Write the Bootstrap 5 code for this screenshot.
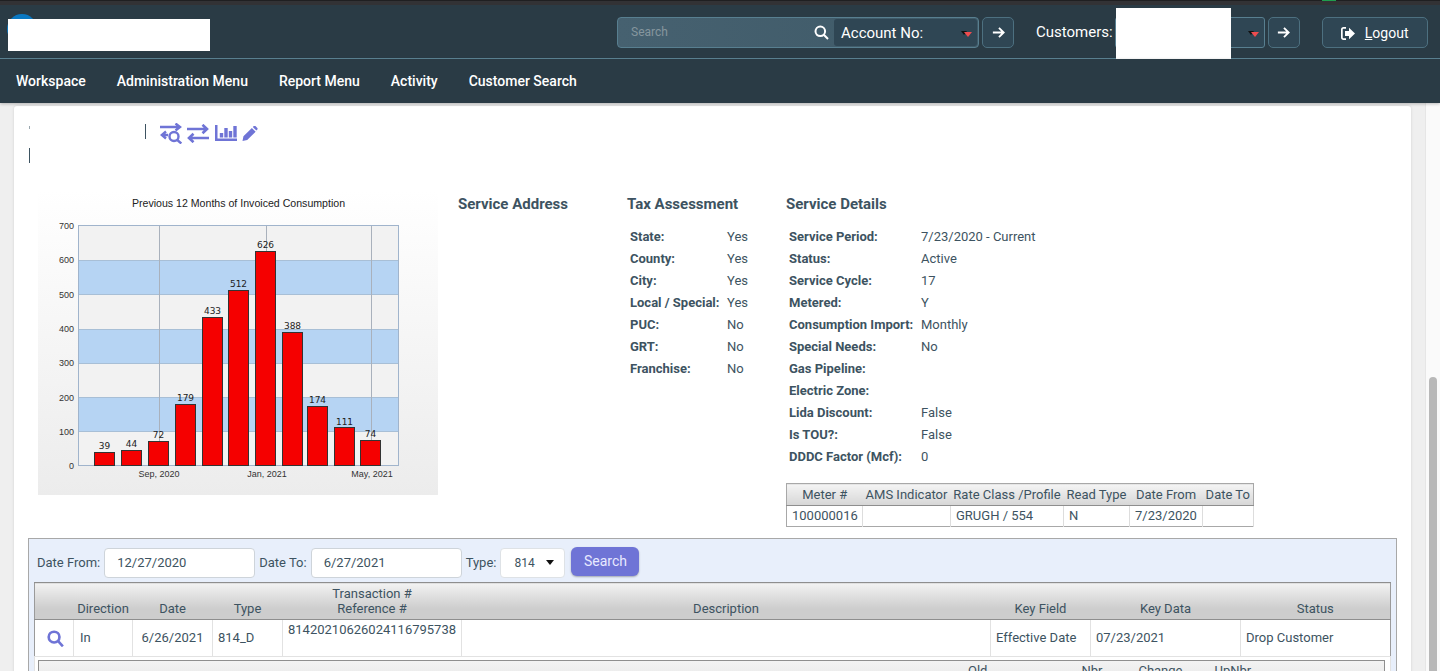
<!DOCTYPE html>
<html lang="en">
<head>
<meta charset="utf-8">
<title>Customer Service</title>
<link rel="stylesheet" href="https://cdn.jsdelivr.net/npm/bootstrap@5.3.0/dist/css/bootstrap.min.css">
<style>
html,body{height:671px;overflow:hidden;margin:0}
body{font-family:Roboto,"Liberation Sans",sans-serif;font-size:13px;color:#3d5361;background:#efefef}
.page-head{position:relative}
.top-strip{height:5px;background:linear-gradient(#1f1f21 1px,#323235 1px);position:relative}
.strip-green{position:absolute;left:1322px;top:0;width:14px;height:1px;background:#1f9d4d}
.head-top{height:54px;background:#2a3b45;border-bottom:1px solid #5d8596;padding:2px 12px 0 617px}
.logo-mask{position:absolute;left:8px;top:19px;width:202px;height:32px;background:#fff}
.logo-dot{position:absolute;left:7px;top:14px;width:30px;height:30px;border-radius:50%;background:#0a78c2}
.mask-white{position:absolute;left:1116px;top:8px;width:115px;height:53px;background:#fff}
.search-box{width:362px;height:31px;background:linear-gradient(90deg,#466170,#3f5a68);border:1px solid #587f90;border-radius:4px;flex:none}
.search-field{flex:1 1 auto;padding:0 0 2px 13px;font-size:12px;background:transparent;border:0;min-width:0;color:#fff;outline:0}
.search-field::placeholder{color:#85969e}
.search-ico{padding-right:5px}
.select-box{background:#2f4654;color:#fff;font-size:15px;display:flex;align-items:center;justify-content:space-between;padding:1px 5px 0 7px;border-radius:3px;flex:none}
.account-sel{width:143px;margin:1px 1px 1px 0}
.cust-sel{width:150px;height:31px;border:1px solid #587f90;justify-content:flex-end;margin-left:2px}
.caret-pair{display:flex;margin-top:2px}
.caret-black{width:0;height:0;border-left:3px solid transparent;border-right:3px solid transparent;border-top:4px solid #111;margin-right:-3px;margin-top:-1px}
.caret-red{width:0;height:0;border-left:4px solid transparent;border-right:4px solid transparent;border-top:5px solid #ef4c4f}
.go-btn{width:32px;height:31px;background:#2f4654;border:1px solid #4d7080;border-radius:5px;color:#fff;padding:0;display:flex;align-items:center;justify-content:center;flex:none}
.go-first{margin-left:3px}
.go-second{margin-left:3px}
.cust-label{color:#fff;font-size:15px;margin-left:22px}
.logout-btn{width:106px;height:31px;background:#2f4654;border:1px solid #4d7080;border-radius:5px;color:#fff;font-size:14px;padding:1px 0 0;display:flex;align-items:center;justify-content:center;gap:10px;margin-left:22px;flex:none}
.main-nav{height:44px;background:#2a3b45;padding-left:16px;gap:31px;box-shadow:0 1px 3px rgba(0,0,0,.25);position:relative}
.main-nav a{color:#fff;font-size:14px;font-weight:500;text-decoration:none}
.page-body{height:568px;overflow:hidden}
.page-main{flex:1 1 auto;min-width:0}
.fake-scroll{width:15px;flex:none;background:#fafafa;border-left:1px solid #e6e6e6;padding:274px 3px 0 3px}
.fake-thumb{height:300px;background:#b8b8b8;border-radius:4px 4px 0 0}
.content-sheet{background:#fff;margin:3px 14px 0 14px;height:600px;padding:0 14px;box-shadow:0 0 3px rgba(0,0,0,.12);border-radius:3px 3px 0 0}
.tool-row{height:84px;padding-top:16px}
.tick-small{width:1px;height:3px;background:#9aa7af;margin:4px 0 0 1px}
.tick-main{width:1px;height:15px;background:#3d5361;margin:2px 14px 0 115px}
.tick-low{width:1px;height:15px;background:#3d5361;margin:4px 0 0 1px}
.ico-a{margin-top:1px;margin-right:5px}
.ico-b{margin-top:2px;margin-right:6px}
.ico-c{margin-top:3px;margin-right:5px}
.ico-d{margin-top:4px}
.chart-col{width:400px;margin-left:10px;flex:none}
.addr-col{width:169px;margin-left:20px;flex:none;padding-top:5px}
.tax-col{width:159px;flex:none;padding-top:5px}
.svc-col{flex:1 1 auto;padding-top:5px}
.sec-title{font-size:15px;font-weight:700;color:#3d5361;height:22px;line-height:18px;margin:0 0 9px}
.info-table{border-collapse:collapse}
.info-table th,.info-table td{height:22px;padding:0 3px;font-size:13px;line-height:22px;white-space:nowrap}
.info-table th{font-weight:700}
.info-table td{font-weight:400}
.tax-col .info-table th{width:97px}
.svc-col .info-table th{width:132px}
.meter-table{border-collapse:collapse;width:468px;margin-top:15px;border:1px solid #a8a8a8;table-layout:fixed}
.meter-table th{background:linear-gradient(#f4f4f4,#d6d6d6);border-bottom:1px solid #8e8e8e;font-weight:400;text-align:center;font-size:13px;height:22px;padding:0;white-space:nowrap}
.meter-table td{border-right:1px solid #ddd;height:21px;font-size:13px;padding:0 5px;white-space:nowrap}
.mc-1{width:76px}.mc-2{width:88px}.mc-3{width:113px}.mc-4{width:66px}.mc-5{width:73px}
.txn-panel{margin-top:11px;border:1px solid #a8a8a8;background:#e8effb;height:200px;padding:0 5px}
.filter-row{height:43px;padding:4px 0 0 3px;gap:4px}
.date-input{width:151px;height:30px;font-size:13px;padding:0 12px;border:1px solid #ced4da;border-radius:4px;color:#3d5361;background:#fff}
.type-select{width:65px;height:30px;font-size:12px;padding:0 0 0 13px;color:#3d5361;border-radius:4px;background-position:right 10px center;background-size:8px 5px;background-image:url("data:image/svg+xml,%3csvg xmlns='http://www.w3.org/2000/svg' viewBox='0 0 8 5'%3e%3cpath d='M0 0h8L4 5z' fill='%23111'/%3e%3c/svg%3e")}
.search-btn{background:#6f74d6;border:0;color:#e8e9ff;font-size:14px;height:29px;width:68px;padding:0;margin-left:2px;margin-top:-2px;box-shadow:0 1px 2px rgba(0,0,0,.3)}
.txn-table{width:100%;border-collapse:collapse;table-layout:fixed;background:#fff;border-left:1px solid #9a9a9a;border-right:1px solid #9a9a9a}
.txn-table th{background:linear-gradient(#f2f2f2,#cdcdcd 70%);font-weight:400;text-align:center;vertical-align:bottom;font-size:13px;line-height:15px;padding:3px 0;border-top:1px solid #8e8e8e;border-bottom:1px solid #8e8e8e}
.txn-table td{font-size:13px;border-right:1px solid #e2e2e2;border-bottom:1px solid #e2e2e2;height:37px;padding:0 5px;vertical-align:middle;line-height:20px}
.txn-table td:last-child{border-right:0}
.tc-1{width:39px}.tc-2{width:59px}.tc-3{width:80px}.tc-4{width:70px}.tc-5{width:179px}.tc-7{width:100px}.tc-8{width:150px}.tc-9{width:150px}
.glass-cell{padding-left:12px!important}
.in-cell{padding-left:6px!important}
.nest-wrap{background:#fff;border-left:1px solid #e2e2e2;border-right:1px solid #e2e2e2;padding:3px 5px 0 3px;height:60px}
.nest-box{border:1px solid #8e8e8e;background:linear-gradient(#f2f2f2,#dcdcdc);height:50px;padding:2px 0 0 929px;line-height:15px}
.nb-2{margin-left:94px}.nb-3{margin-left:36px}.nb-4{margin-left:32px}
</style>
</head>
<body>
<div class="page-head">
  <div class="top-strip"><span class="strip-green"></span></div>
  <div class="head-top d-flex align-items-center">
    <div class="search-box d-flex align-items-stretch">
      <input class="search-field" placeholder="Search" aria-label="Search">
      <span class="search-ico d-flex align-items-center"><svg width="15" height="15" viewBox="0 0 15 15" fill="none" stroke="#fff" stroke-width="2"><circle cx="6.300" cy="6.300" r="4.800"/><path d="M9.800 9.800 14 14"/></svg></span>
      <div class="select-box account-sel"><span>Account No:</span><span class="caret-pair"><span class="caret-black"></span><span class="caret-red"></span></span></div>
    </div>
    <button class="go-btn go-first" aria-label="Go"><svg width="15" height="15" viewBox="0 0 16 16" fill="none" stroke="#fff" stroke-width="2"><path d="M2 8h11.500M8.500 3 13.500 8l-5 5"/></svg></button>
    <span class="cust-label">Customers:</span>
    <div class="select-box cust-sel"><span class="caret-pair"><span class="caret-black"></span><span class="caret-red"></span></span></div>
    <button class="go-btn go-second" aria-label="Go"><svg width="15" height="15" viewBox="0 0 16 16" fill="none" stroke="#fff" stroke-width="2"><path d="M2 8h11.500M8.500 3 13.500 8l-5 5"/></svg></button>
    <button class="logout-btn"><svg width="14" height="13" viewBox="0 0 14 13" fill="#fff"><path d="M5 0H2.500C1 0 0 1 0 2.500v8C0 12 1 13 2.500 13H5v-1.700H2.700c-.6 0-1-.4-1-1V2.700c0-.6.4-1 1-1H5z"/><path d="M8 .8 14 6.500 8 12.200V9H4V4h4z"/></svg><span><u>L</u>ogout</span></button>
  </div>
  <div class="logo-dot"></div>
  <div class="logo-mask"></div>
  <div class="mask-white"></div>
  <nav class="main-nav d-flex align-items-center">
    <a href="#">Workspace</a><a href="#">Administration Menu</a><a href="#">Report Menu</a><a href="#">Activity</a><a href="#">Customer Search</a>
  </nav>
</div>
<div class="page-body d-flex">
<div class="page-main">
  <div class="content-sheet">
    <div class="tool-row">
      <div class="d-flex align-items-start">
        <span class="tick-small"></span>
        <span class="tick-main"></span>
        <svg class="ico-a" width="22" height="21" viewBox="0 0 22 21" fill="none" stroke="#6f74d6" stroke-width="2.400"><path d="M0 4h20M15.500 .5 20 4l-4.500 3.500"/><path d="M8 12H2M6 8.500 1.800 12 6 15.500"/><circle cx="14" cy="13.500" r="4.500"/><path d="m17.300 17 4 3.500"/></svg>
        <svg class="ico-b" width="22" height="19" viewBox="0 0 22 19" fill="none" stroke="#6f74d6" stroke-width="2.600"><path d="M0 5h20M15.500 .8 20 5l-4.500 4.200"/><path d="M22 14H2M6.500 9.800 2 14l4.500 4.200"/></svg>
        <svg class="ico-c" width="22" height="16" viewBox="0 0 22 16" fill="#6f74d6"><path d="M0 0h2.500v13.500H22V16H0z"/><rect x="4.800" y="8" width="3.400" height="4.500"/><rect x="9.300" y="3" width="3.400" height="9.500"/><rect x="13.800" y="6" width="3.400" height="6.500"/><rect x="18.300" y="1" width="3.400" height="11.500"/></svg>
        <svg class="ico-d" width="16" height="15" viewBox="0 0 16 16" fill="#6f74d6"><path d="M0 16l1-5L10 2l4 4-9 9zM11 1l1-1c.6-.5 1.200-.5 1.800 0l2 2c.5.6.5 1.200 0 1.800l-1 1z"/></svg>
      </div>
      <div class="tick-low"></div>
    </div>
    <div class="d-flex align-items-start">
      <div class="chart-col">
        <svg width="400" height="305" viewBox="0 0 400 305" font-family="'Liberation Sans',sans-serif" class="d-block">
          <defs><linearGradient id="bgGrad" x1="0" y1="0" x2="0" y2="1"><stop offset="0" stop-color="#fff"/><stop offset="1" stop-color="#ececec"/></linearGradient></defs>
          <rect width="400" height="305" fill="url(#bgGrad)"/>
          <text x="200.500" y="17" text-anchor="middle" font-size="10.600" fill="#222">Previous 12 Months of Invoiced Consumption</text>
          <rect x="40" y="35" width="320" height="240" fill="#f2f2f2"/>
          <rect x="40" y="70" width="320" height="34" fill="#b6d4f3"/>
          <rect x="40" y="139" width="320" height="34" fill="#b6d4f3"/>
          <rect x="40" y="207" width="320" height="34" fill="#b6d4f3"/>
          <path d="M40 70.500h320M40 104.500h320M40 139.500h320M40 173.500h320M40 207.500h320M40 241.500h320" stroke="#a8bfd6" stroke-width="1"/>
          <path d="M121.500 35v240M228.500 35v240M333.500 35v240" stroke="#a9b1bc" stroke-width="1"/>
          <rect x="40.500" y="35.500" width="320" height="240" fill="none" stroke="#a0b4cc"/>
          <g fill="#f50000" stroke="#333" stroke-width="1">
            <rect x="56.500" y="262.500" width="20" height="13"/><rect x="83.500" y="260.500" width="20" height="15"/><rect x="110.500" y="251.500" width="20" height="24"/><rect x="137.500" y="214.500" width="20" height="61"/><rect x="164.500" y="127.500" width="20" height="148"/><rect x="190.500" y="100.500" width="20" height="175"/><rect x="217.500" y="61.500" width="20" height="214"/><rect x="244.500" y="142.500" width="20" height="133"/><rect x="269.500" y="216.500" width="20" height="59"/><rect x="296.500" y="237.500" width="20" height="38"/><rect x="322.500" y="250.500" width="20" height="25"/>
          </g>
          <g font-size="9" fill="#222" text-anchor="middle" font-family="'DejaVu Sans',sans-serif">
            <text x="66.500" y="259">39</text><text x="93.500" y="257">44</text><text x="120.500" y="248">72</text><text x="147.500" y="211">179</text><text x="174.500" y="124">433</text><text x="200.500" y="97">512</text><text x="227.500" y="58">626</text><text x="254.500" y="139">388</text><text x="279.500" y="213">174</text><text x="306.500" y="235">111</text><text x="332.500" y="247">74</text>
          </g>
          <g font-size="9" fill="#333" text-anchor="end">
            <text x="36" y="39">700</text><text x="36" y="73">600</text><text x="36" y="108">500</text><text x="36" y="142">400</text><text x="36" y="176">300</text><text x="36" y="211">200</text><text x="36" y="245">100</text><text x="36" y="279">0</text>
          </g>
          <g font-size="9" fill="#333" text-anchor="middle">
            <text x="121" y="287">Sep, 2020</text><text x="229" y="287">Jan, 2021</text><text x="334" y="287">May, 2021</text>
          </g>
        </svg>
      </div>
      <div class="addr-col"><h5 class="sec-title">Service Address</h5></div>
      <div class="tax-col"><h5 class="sec-title">Tax Assessment</h5>
        <table class="info-table">
          <tr><th>State:</th><td>Yes</td></tr><tr><th>County:</th><td>Yes</td></tr><tr><th>City:</th><td>Yes</td></tr><tr><th>Local / Special:</th><td>Yes</td></tr><tr><th>PUC:</th><td>No</td></tr><tr><th>GRT:</th><td>No</td></tr><tr><th>Franchise:</th><td>No</td></tr>
        </table>
      </div>
      <div class="svc-col"><h5 class="sec-title">Service Details</h5>
        <table class="info-table">
          <tr><th>Service Period:</th><td>7/23/2020 - Current</td></tr><tr><th>Status:</th><td>Active</td></tr><tr><th>Service Cycle:</th><td>17</td></tr><tr><th>Metered:</th><td>Y</td></tr><tr><th>Consumption Import:</th><td>Monthly</td></tr><tr><th>Special Needs:</th><td>No</td></tr><tr><th>Gas Pipeline:</th><td></td></tr><tr><th>Electric Zone:</th><td></td></tr><tr><th>Lida Discount:</th><td>False</td></tr><tr><th>Is TOU?:</th><td>False</td></tr><tr><th>DDDC Factor (Mcf):</th><td>0</td></tr>
        </table>
        <table class="meter-table">
          <colgroup><col class="mc-1"><col class="mc-2"><col class="mc-3"><col class="mc-4"><col class="mc-5"><col></colgroup>
          <thead><tr><th>Meter #</th><th>AMS Indicator</th><th>Rate Class /Profile</th><th>Read Type</th><th>Date From</th><th>Date To</th></tr></thead>
          <tbody><tr><td>100000016</td><td></td><td>GRUGH / 554</td><td>N</td><td>7/23/2020</td><td></td></tr></tbody>
        </table>
      </div>
    </div>
    <div class="txn-panel">
      <div class="filter-row d-flex align-items-center">
        <span>Date From:</span><input class="date-input" value="12/27/2020" aria-label="Date From">
        <span>Date To:</span><input class="date-input" value="6/27/2021" aria-label="Date To">
        <span>Type:</span><select class="form-select type-select" aria-label="Type"><option>814</option></select>
        <button class="btn search-btn">Search</button>
      </div>
      <table class="txn-table">
        <colgroup><col class="tc-1"><col class="tc-2"><col class="tc-3"><col class="tc-4"><col class="tc-5"><col><col class="tc-7"><col class="tc-8"><col class="tc-9"></colgroup>
        <thead><tr><th></th><th>Direction</th><th>Date</th><th>Type</th><th>Transaction #<br>Reference #</th><th>Description</th><th>Key Field</th><th>Key Data</th><th>Status</th></tr></thead>
        <tbody><tr>
          <td class="glass-cell"><svg width="17" height="17" viewBox="0 0 18 18" fill="none" stroke="#6f74d6" stroke-width="2.800" class="d-block"><circle cx="7.500" cy="7.500" r="5.700"/><path d="m11.800 11.800 5 5.500"/></svg></td>
          <td class="in-cell">In</td><td class="text-center">6/26/2021</td><td>814_D</td><td class="align-top pt-0">81420210626024116795738</td><td></td><td>Effective Date</td><td>07/23/2021</td><td>Drop Customer</td>
        </tr></tbody>
      </table>
      <div class="nest-wrap">
        <div class="nest-box d-flex"><span>Old</span><span class="nb-2">Nbr</span><span class="nb-3">Change</span><span class="nb-4">UpNbr</span></div>
      </div>
    </div>
  </div>
</div>
<div class="fake-scroll"><div class="fake-thumb"></div></div>
</div>
<script src="https://cdn.jsdelivr.net/npm/bootstrap@5.3.0/dist/js/bootstrap.bundle.min.js"></script>
</body>
</html>
